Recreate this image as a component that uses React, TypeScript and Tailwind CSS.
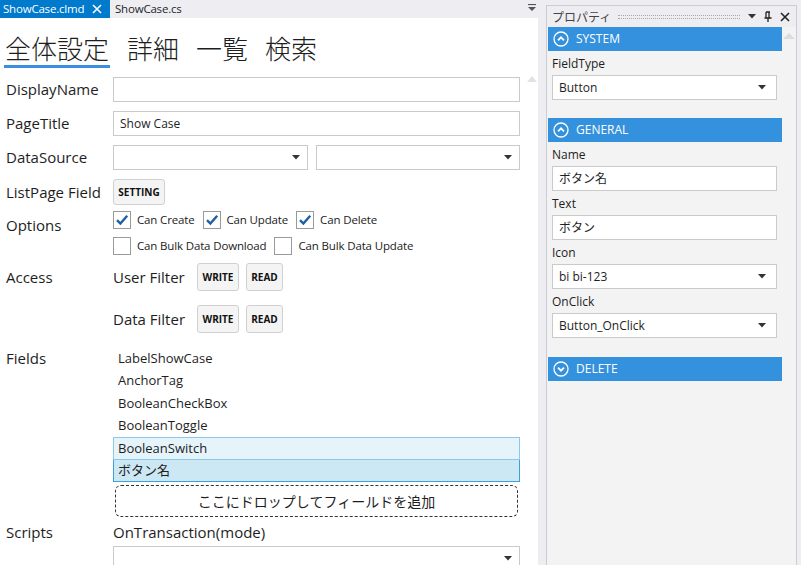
import React from 'react';

const font = "font-['Segoe_UI','Open_Sans','Noto_Sans_CJK_JP',sans-serif]";

function Arrow() {
  return (
    <svg width="8" height="5" viewBox="0 0 8 5" className="shrink-0">
      <path d="M0 0 H8 L4 4.5 Z" fill="#333" />
    </svg>
  );
}

function Check({ checked, label }: { checked?: boolean; label: string }) {
  return (
    <div className="flex items-center gap-[6px]">
      <span className="w-[18px] h-[18px] border border-[#9a9a9a] bg-white flex items-center justify-center">
        {checked && (
          <svg width="14" height="14" viewBox="0 0 14 14">
            <path d="M2 7.2 L5.4 10.6 L12.2 2.8" fill="none" stroke="#1f5fa6" strokeWidth="2.4" />
          </svg>
        )}
      </span>
      <span className="text-[11.5px] tracking-[-0.15px] text-[#222]">{label}</span>
    </div>
  );
}

function SmallBtn({ children, w }: { children: React.ReactNode; w: string }) {
  return (
    <div className={`${w} h-full flex items-center justify-center bg-[#f4f4f4] border border-[#d0d0d0] rounded-[3px] text-[10px] font-bold text-[#111]`}>
      {children}
    </div>
  );
}

function Row({ label, h, mt, children }: { label: string; h: string; mt: string; children?: React.ReactNode }) {
  return (
    <div className={`flex items-center ${h} ${mt}`}>
      <div className="w-[107px] text-[15px] text-[#1e1e1e]">{label}</div>
      <div className="flex-1 h-full flex items-center">{children}</div>
    </div>
  );
}

function Circle({ up }: { up?: boolean }) {
  return (
    <svg width="16" height="16" viewBox="0 0 16 16" className="shrink-0">
      <circle cx="8" cy="8" r="7" fill="none" stroke="white" strokeWidth="1.3" />
      <path d={up ? 'M5 9.3 L8 6.3 L11 9.3' : 'M5 6.7 L8 9.7 L11 6.7'} fill="none" stroke="white" strokeWidth="1.8" />
    </svg>
  );
}

function Section({ title, up }: { title: string; up?: boolean }) {
  return (
    <div className="h-[24px] bg-[#3491dd] flex items-center gap-[7px] pl-[5px] text-white text-[12px]">
      <Circle up={up} />
      <span>{title}</span>
    </div>
  );
}

function PropLabel({ children }: { children: React.ReactNode }) {
  return <div className="mt-[3px] leading-[20px] text-[12px] text-[#1e1e1e] pl-[4px]">{children}</div>;
}

function PropBox({ value, select }: { value: string; select?: boolean }) {
  return (
    <div className="mt-[1px] ml-[4px] w-[225px] h-[25px] bg-white border border-[#cacaca] flex items-center justify-between pl-[6px] pr-[10px] text-[12px] text-[#1e1e1e]">
      <span>{value}</span>
      {select && <Arrow />}
    </div>
  );
}

export default function App() {
  const fields = ['LabelShowCase', 'AnchorTag', 'BooleanCheckBox', 'BooleanToggle'];
  return (
    <div className={`${font} w-[801px] h-[565px] overflow-hidden flex bg-[#eeeef2] text-[#1e1e1e]`}>
      {/* document area */}
      <div className="w-[538px] h-full flex flex-col">
        <div className="h-[23px] flex items-end relative">
          <div className="h-[18px] w-[110px] bg-[#007acc] text-white text-[11.5px] tracking-[-0.2px] flex items-center pl-[3px] gap-[8px]">
            <span>ShowCase.clmd</span>
            <svg width="10" height="10" viewBox="0 0 10 10">
              <path d="M1 1 L9 9 M9 1 L1 9" stroke="white" strokeWidth="1.6" />
            </svg>
          </div>
          <div className="h-[18px] pl-[5px] text-[11.5px] tracking-[-0.2px] flex items-center text-[#1e1e1e]">ShowCase.cs</div>
          <div className="ml-auto mr-[2px] mb-[6px]">
            <svg width="8" height="8" viewBox="0 0 8 8">
              <path d="M0 0.5 H8" stroke="#555" strokeWidth="1.2" />
              <path d="M0 3 H8 L4 7 Z" fill="#555" />
            </svg>
          </div>
        </div>
        <div className="h-[2px] bg-[#007acc]" />
        <div className="flex-1 flex bg-white">
          <div className="w-[526px] pl-[6px]">
            {/* headings */}
            <div className="flex items-end gap-[17px] mt-[13px] text-[26px] leading-[34px] font-light font-['Noto_Sans_CJK_JP',sans-serif] text-[#1e1e1e]">
              <span className="border-b-[3px] border-[#3a8fe0] -ml-[2px] px-[1px]">全体設定</span>
              <span className="pb-[3px]">詳細</span>
              <span className="pb-[3px]">一覧</span>
              <span className="pb-[3px]">検索</span>
            </div>

            <Row label="DisplayName" h="h-[25px]" mt="mt-[9px]">
              <div className="w-[407px] h-full border border-[#cacaca]" />
            </Row>
            <Row label="PageTitle" h="h-[25px]" mt="mt-[9px]">
              <div className="w-[407px] h-full border border-[#cacaca] flex items-center pl-[6px] text-[12px]">Show Case</div>
            </Row>
            <Row label="DataSource" h="h-[25px]" mt="mt-[9px]">
              <div className="w-[195px] h-full border border-[#cacaca] flex items-center justify-end pr-[7px]"><Arrow /></div>
              <div className="w-[204px] ml-[8px] h-full border border-[#cacaca] flex items-center justify-end pr-[7px]"><Arrow /></div>
            </Row>
            <Row label="ListPage Field" h="h-[26px]" mt="mt-[9px]">
              <SmallBtn w="w-[52px]">SETTING</SmallBtn>
            </Row>

            {/* options */}
            <div className="flex mt-[6px]">
              <div className="w-[107px] text-[15px] leading-[20px] mt-[4px]">Options</div>
              <div className="flex flex-col gap-[8px]">
                <div className="flex gap-[8px] h-[18px]">
                  <Check checked label="Can Create" />
                  <Check checked label="Can Update" />
                  <Check checked label="Can Delete" />
                </div>
                <div className="flex gap-[8px] h-[18px]">
                  <Check label="Can Bulk Data Download" />
                  <Check label="Can Bulk Data Update" />
                </div>
              </div>
            </div>

            {/* access */}
            <Row label="Access" h="h-[28px]" mt="mt-[8px]">
              <div className="w-[84px] text-[15px]">User Filter</div>
              <SmallBtn w="w-[42px]">WRITE</SmallBtn>
              <div className="w-[7px]" />
              <SmallBtn w="w-[37px]">READ</SmallBtn>
            </Row>
            <Row label="" h="h-[28px]" mt="mt-[14px]">
              <div className="w-[84px] text-[15px]">Data Filter</div>
              <SmallBtn w="w-[42px]">WRITE</SmallBtn>
              <div className="w-[7px]" />
              <SmallBtn w="w-[37px]">READ</SmallBtn>
            </Row>

            {/* fields */}
            <div className="flex mt-[14px]">
              <div className="w-[107px] text-[15px] leading-[22px]">Fields</div>
              <div className="w-[407px] flex flex-col">
                {fields.map(f => (
                  <div key={f} className="h-[22.5px] flex items-center pl-[5px] text-[13px]">{f}</div>
                ))}
                <div className="h-[23px] flex items-center pl-[4px] text-[13px] bg-[#e5f3fb] border border-[#8dc8ea]">BooleanSwitch</div>
                <div className="h-[22px] flex items-center pl-[4px] text-[13px] bg-[#cce8f5] border border-[#3f9fd8] border-t-0">ボタン名</div>
                <div className="mt-[3px] mx-[2px] h-[32px] border border-dashed border-[#333] rounded-[6px] flex items-center justify-center text-[14px]">
                  ここにドロップしてフィールドを追加
                </div>
              </div>
            </div>

            {/* scripts */}
            <Row label="Scripts" h="h-[22px]" mt="mt-[4px]">
              <span className="text-[15px]">OnTransaction(mode)</span>
            </Row>
            <div className="ml-[107px] mt-[3px] w-[407px] h-[25px] border border-[#cacaca] flex items-center justify-end pr-[7px]">
              <Arrow />
            </div>
          </div>
          {/* scrollbar */}
          <div className="w-[12px] flex flex-col items-center pt-[58px]">
            <svg width="10" height="6" viewBox="0 0 10 6"><path d="M0 6 L5 0 L10 6 Z" fill="#e2e2e2" /></svg>
          </div>
        </div>
      </div>

      {/* properties panel */}
      <div className="ml-[8px] mt-[5px] w-[251px] h-[560px] border-x border-t border-[#ccccd6] flex flex-col">
        <div className="h-[21px] bg-[#eeeef2] flex items-center pl-[5px] pr-[6px] text-[12px] text-[#444]">
          <span className="font-['Noto_Sans_CJK_JP',sans-serif] text-[12px]">プロパティ</span>
          <div className="flex-1 ml-[7px] mr-[8px] h-[4px] border-y border-dotted border-[#a8a8b0]" />
          <svg width="8" height="5" viewBox="0 0 8 5"><path d="M0 0 H8 L4 4.5 Z" fill="#333" /></svg>
          <svg width="8" height="11" viewBox="0 0 8 11" className="ml-[8px]">
            <path d="M2 1 H6 M2 1 V7 M5 1 V7 M0.5 7 H7.5 M4 7 V11" stroke="#222" strokeWidth="1.3" fill="none" />
          </svg>
          <svg width="10" height="10" viewBox="0 0 10 10" className="ml-[8px]">
            <path d="M1 1 L9 9 M9 1 L1 9" stroke="#222" strokeWidth="1.6" />
          </svg>
        </div>
        <div className="flex-1 bg-[#f3f3f3] flex">
          <div className="w-[235px] pl-[1px] flex flex-col">
            <Section title="SYSTEM" up />
            <PropLabel>FieldType</PropLabel>
            <PropBox value="Button" select />
            <div className="mt-[18px]"><Section title="GENERAL" up /></div>
            <PropLabel>Name</PropLabel>
            <PropBox value="ボタン名" />
            <PropLabel>Text</PropLabel>
            <PropBox value="ボタン" />
            <PropLabel>Icon</PropLabel>
            <PropBox value="bi bi-123" select />
            <PropLabel>OnClick</PropLabel>
            <PropBox value="Button_OnClick" select />
            <div className="mt-[19px]"><Section title="DELETE" /></div>
          </div>
          <div className="flex-1 flex justify-center pt-[6px]">
            <svg width="12" height="6" viewBox="0 0 12 6"><path d="M0 6 L6 0 L12 6 Z" fill="#dcdcdc" /></svg>
          </div>
        </div>
      </div>
    </div>
  );
}
